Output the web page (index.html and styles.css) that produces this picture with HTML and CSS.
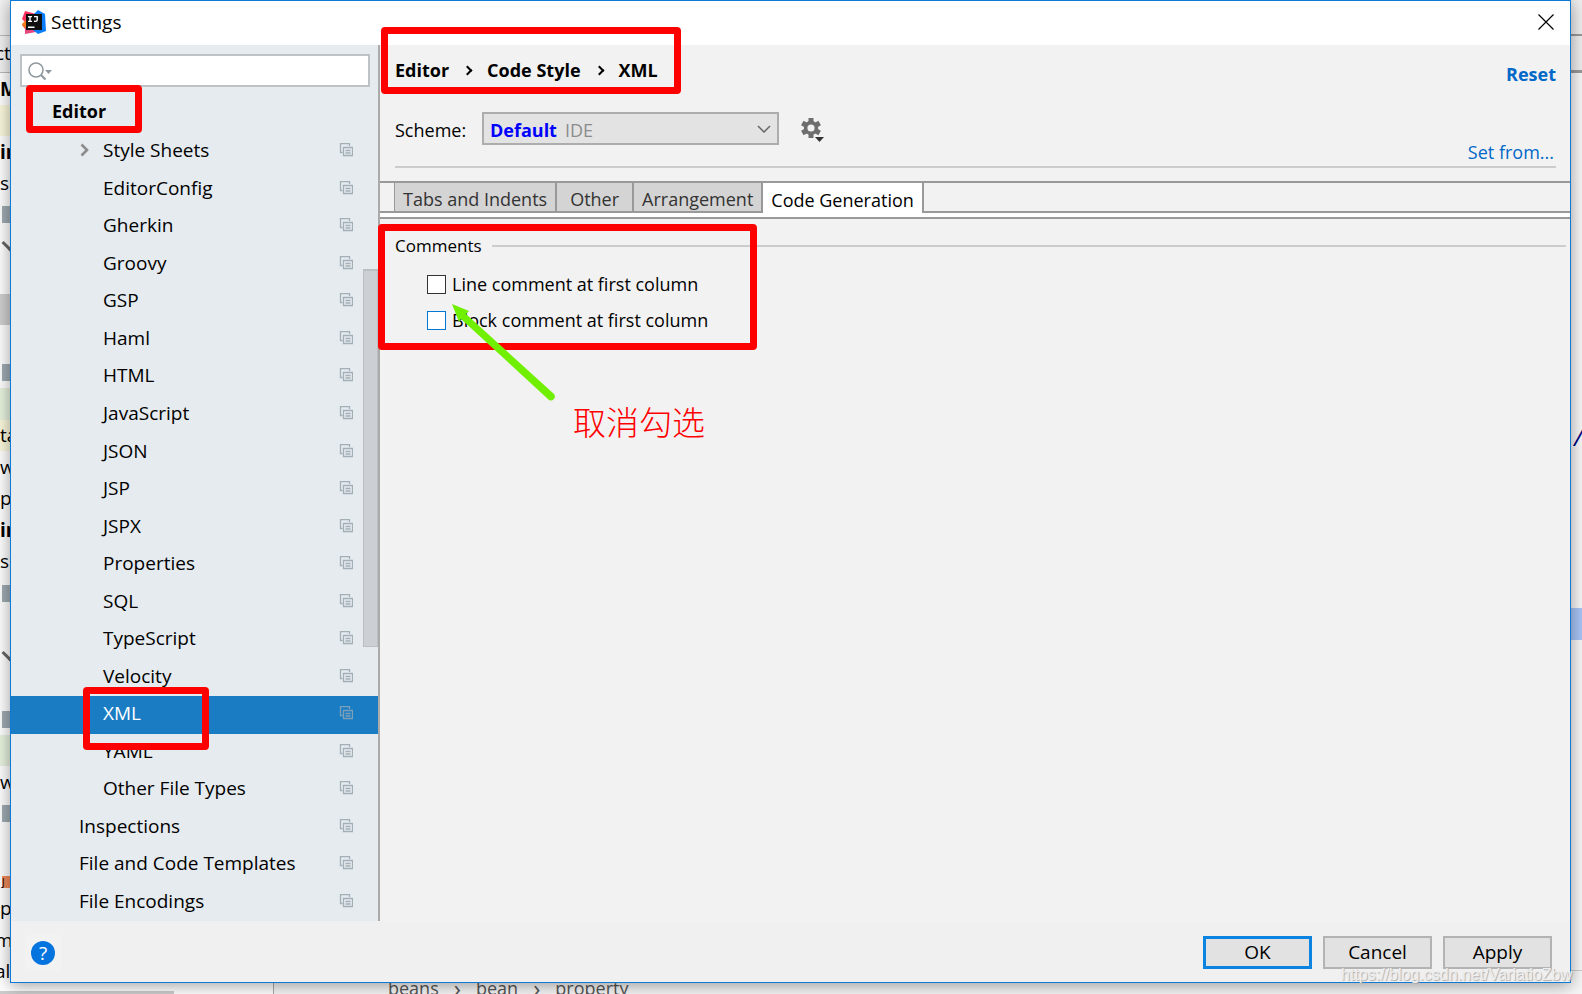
FILE: index.html
```html
<!DOCTYPE html>
<html lang="en">
<head>
<meta charset="utf-8">
<title>Settings</title>
<link rel="stylesheet" href="styles.css">
</head>
<body>
<svg class="defs" width="0" height="0" aria-hidden="true">
  <symbol id="copy" viewBox="0 0 14 14">
    <path d="M3.5 9.5H1.5V.5H10.5V3M4.500 4.500H13.5V12.5H4.500Z M6.500 7.500H11.500M6.500 10H11.500" fill="none" stroke="currentColor" stroke-width="1.3"/>
  </symbol>
</svg>

<div class="ide" aria-hidden="true">
  <div class="ide-left">
    <div class="ide-toolbar"></div>
    <div class="ide-nav cut">ct</div>
    <div class="ide-rows">
      <div class="r b">M</div><div class="r yellow"></div><div class="r b">in</div><div class="r">sr</div>
      <div class="r"><i class="sq"></i></div><div class="r"><i class="chev"></i></div><div class="r"></div><div class="r gray"></div>
      <div class="r"></div><div class="r"><i class="sq"></i></div><div class="r green"></div><div class="r yellow">ta</div>
      <div class="r">w</div><div class="r">p</div><div class="r b">in</div><div class="r">sr</div>
      <div class="r"><i class="sq"></i></div><div class="r"></div><div class="r"><i class="chev"></i></div><div class="r"></div>
      <div class="r"><i class="sq"></i></div><div class="r green"></div><div class="r">w</div><div class="r"><i class="sq"></i></div>
      <div class="r"></div><div class="r"><i class="jar">J</i></div><div class="r">p</div><div class="r cut">m</div><div class="r cut">al</div>
    </div>
  </div>
  <div class="ide-right">
    <div class="strip-a"></div><div class="strip-b"></div>
    <div class="strip-c"><span>/</span></div>
    <div class="strip-sel"></div><div class="strip-d"></div>
  </div>
  <div class="ide-bottom">
    <div class="hscroll"></div>
    <div class="crumb-line"><span>beans</span><i>›</i><span>bean</span><i>›</i><span>property</span></div>
  </div>
</div>

<div class="dialog" role="dialog" aria-label="Settings">
  <header class="titlebar">
    <svg class="logo" viewBox="0 0 24 24" aria-hidden="true">
      <path d="M3 1L14 4 12 18 4 20 0 15 3 12 0 9Z" fill="#fe315d"/>
      <path d="M0 14L4 10 8 17 3 19Z" fill="#f97a12"/>
      <path d="M3 17L12 18 14 22 3 24Z" fill="#e6467b"/>
      <path d="M12 4L16 0 23 4 24 21 16 24 11 20Z" fill="#087cfa"/>
      <path d="M4 4H20V20H4Z" fill="#101010"/>
      <path d="M6 6.6H10M8 6.6V11.4M6 11.4H10M12 6.6H15.2V10Q15.2 11.4 13.6 11.4L12 11.2M6 17.2H12.5" fill="none" stroke="#fff" stroke-width="1.4"/>
    </svg>
    <h1>Settings</h1>
    <button class="close" type="button" aria-label="Close"><svg viewBox="0 0 16 16"><path d="M.5 .5L15.5 15.5M15.5 .5L.5 15.5" stroke="#000" stroke-width="1.2"/></svg></button>
  </header>

  <div class="body">
    <aside class="sidebar">
      <div class="search">
        <svg viewBox="0 0 24 18" aria-hidden="true"><circle cx="8" cy="8" r="7" fill="none" stroke="#8f999f" stroke-width="1.6"/><path d="M13 13L17.500 17.500" stroke="#8f999f" stroke-width="2.200"/><path d="M17 8H24L20.500 12Z" fill="#8f999f"/></svg>
        <input type="text" aria-label="Search settings">
      </div>
      <div class="group">Editor</div>
      <ul class="tree">
        <li><svg class="arrow" viewBox="0 0 8 14" aria-hidden="true"><path d="M1 1.500L6.500 7 1 12.500" fill="none" stroke="#8c8c8c" stroke-width="2.600"/></svg>Style Sheets<svg class="copy"><use href="#copy"/></svg></li>
        <li>EditorConfig<svg class="copy"><use href="#copy"/></svg></li>
        <li>Gherkin<svg class="copy"><use href="#copy"/></svg></li>
        <li>Groovy<svg class="copy"><use href="#copy"/></svg></li>
        <li>GSP<svg class="copy"><use href="#copy"/></svg></li>
        <li>Haml<svg class="copy"><use href="#copy"/></svg></li>
        <li>HTML<svg class="copy"><use href="#copy"/></svg></li>
        <li>JavaScript<svg class="copy"><use href="#copy"/></svg></li>
        <li>JSON<svg class="copy"><use href="#copy"/></svg></li>
        <li>JSP<svg class="copy"><use href="#copy"/></svg></li>
        <li>JSPX<svg class="copy"><use href="#copy"/></svg></li>
        <li>Properties<svg class="copy"><use href="#copy"/></svg></li>
        <li>SQL<svg class="copy"><use href="#copy"/></svg></li>
        <li>TypeScript<svg class="copy"><use href="#copy"/></svg></li>
        <li>Velocity<svg class="copy"><use href="#copy"/></svg></li>
        <li class="selected">XML<svg class="copy"><use href="#copy"/></svg></li>
        <li>YAML<svg class="copy"><use href="#copy"/></svg></li>
        <li>Other File Types<svg class="copy"><use href="#copy"/></svg></li>
        <li class="upper">Inspections<svg class="copy"><use href="#copy"/></svg></li>
        <li class="upper">File and Code Templates<svg class="copy"><use href="#copy"/></svg></li>
        <li class="upper">File Encodings<svg class="copy"><use href="#copy"/></svg></li>
      </ul>
      <div class="scroll-thumb"></div>
    </aside>

    <main class="content">
      <div class="head">
        <nav class="crumbs" aria-label="Breadcrumb"><span>Editor</span><i></i><span>Code Style</span><i></i><span>XML</span></nav>
        <a class="reset" href="#reset">Reset</a>
      </div>
      <div class="scheme">
        <label for="scheme">Scheme:</label>
        <div class="combo">
          <select id="scheme"><option>Default</option></select>
          <span class="hint">IDE</span>
          <svg viewBox="0 0 14 8" aria-hidden="true"><path d="M1 1L7 7 13 1" fill="none" stroke="#666" stroke-width="1.500"/></svg>
        </div>
        <button class="gear" type="button" aria-label="Scheme actions">
          <svg viewBox="0 0 24 24"><g fill="#6e6e6e"><path d="M7.500 0H12.500V20H7.500Z"/><path d="M7.500 0H12.500V20H7.500Z" transform="rotate(60 10 10)"/><path d="M7.500 0H12.500V20H7.500Z" transform="rotate(120 10 10)"/><circle cx="10" cy="10" r="7.200"/></g><circle cx="10" cy="10" r="3.600" fill="#f2f2f2"/><path d="M14 19H23L18.500 24Z" fill="#333"/></svg>
        </button>
      </div>
      <div class="set-from"><a href="#set-from">Set from...</a></div>
      <div class="tabs" role="tablist">
        <button type="button" role="tab">Tabs and Indents</button>
        <button type="button" role="tab">Other</button>
        <button type="button" role="tab">Arrangement</button>
        <button type="button" role="tab" aria-selected="true">Code Generation</button>
      </div>
      <div class="tab-base"></div>
      <section class="panel">
        <h2>Comments</h2>
        <label><input type="checkbox">Line comment at first column</label>
        <label><input type="checkbox" class="hover">Block comment at first column</label>
      </section>
    </main>
  </div>

  <footer class="footer">
    <button class="help" type="button" aria-label="Help"><span>?</span></button>
    <button class="btn primary" type="button">OK</button>
    <button class="btn" type="button">Cancel</button>
    <button class="btn" type="button">Apply</button>
  </footer>
</div>

<div class="notes">
  <div class="mark mark-editor"></div>
  <div class="mark mark-path"></div>
  <div class="mark mark-comments"></div>
  <div class="mark mark-xml"></div>
  <svg class="pointer" viewBox="0 0 104 98" aria-hidden="true"><path d="M0 0L17 7 14 10 102 90A4 4 0 0 1 97 96L9 15 7 18Z" fill="#70f000"/></svg>
  <div class="note" lang="zh">取消勾选</div>
  <div class="watermark">https://blog.csdn.net/VariatioZbw</div>
</div>
</body>
</html>
```
FILE: styles.css
```css
* { box-sizing: border-box; }
html, body { height: 100%; margin: 0; }
body {
  position: relative;
  overflow: hidden;
  background: #fff;
  color: #000;
  font: 19px/26px "Open Sans", "Noto Sans", "Noto Sans CJK SC", sans-serif;
}
button, input, select { font: inherit; color: inherit; margin: 0; }
button { padding: 0; border: 0; background: none; }
a { color: #0068c8; text-decoration: none; }
svg { display: block; flex: none; }
.defs { position: absolute; }

/* Editor window behind the dialog */
.ide { position: absolute; inset: 0; }
.ide-left { position: absolute; inset: 0 auto 7px 0; width: 24px; overflow: hidden; display: flex; flex-direction: column; }
.ide-toolbar { height: 36px; background: #f2f2f2; border-bottom: 1px solid #bbb; }
.ide-nav { height: 37px; padding-top: 4px; background: #f2f2f2; border-bottom: 1px solid #bbb; }
.ide-rows { flex: 1; display: flex; flex-direction: column; }
.r { flex: 1; min-height: 0; display: flex; align-items: center; white-space: nowrap; }
.b { font-weight: 700; }
.cut { text-indent: -5px; }
.yellow { background: #fbf9dc; }
.green { background: #e8f3df; }
.gray { background: #d0d0d0; }
.sq { width: 10px; height: 17px; margin-left: 2px; background: #9fabb3; }
.chev { width: 12px; height: 12px; margin: -6px 0 0 4px; border: solid #666; border-width: 0 0 3px 3px; transform: rotate(-45deg); }
.jar { width: 10px; margin: 10px 0 0 2px; background: #f28b5b; font-size: 10px; line-height: 12px; font-style: normal; }
.ide-right { position: absolute; inset: 0 0 11px auto; width: 11px; background: #f8f8f8; display: flex; flex-direction: column; }
.strip-a { height: 36px; background: #efefef; border-bottom: 2px solid #999; }
.strip-b { height: 37px; background: #efefef; border-bottom: 3px solid #999; }
.strip-c { height: 535px; display: flex; align-items: center; padding: 192px 0 0 3px; font-size: 24px; font-style: italic; color: #000080; overflow: hidden; }
.strip-sel { height: 32px; background: #a8c5f8; }
.strip-d { height: 331px; border-bottom: 1px solid #ccc; }
.ide-bottom { position: absolute; inset: auto 0 0 0; height: 14px; display: flex; overflow: hidden; background: #f6f6f6; }
.hscroll { width: 274px; border-right: 1px solid #aaa; background: linear-gradient(#ccc, #ccc) left bottom / 174px 3px no-repeat #fff; }
.crumb-line { display: flex; gap: 15px; padding-left: 114px; color: #555; font-size: 18px; line-height: 17px; }
.crumb-line i { font-style: normal; font-size: 24px; line-height: 15px; }

/* Dialog */
.dialog {
  position: absolute;
  inset: 0 11px 11px 10px;
  display: flex;
  flex-direction: column;
  border: 1px solid #0f7ad5;
  background: #f0f0f0;
  box-shadow: 0 2px 16px rgba(0, 0, 0, .4);
}
.titlebar { display: flex; align-items: center; height: 44px; padding: 0 16px 2px 11px; background: #fff; }
.logo { width: 24px; height: 24px; }
h1 { flex: 1; margin: 0 0 0 5px; font-size: 19px; font-weight: 400; }
.close svg { width: 16px; height: 16px; }
.body { flex: 1; min-height: 0; display: flex; }

.sidebar { position: relative; width: 369px; display: flex; flex-direction: column; background: #e6ebef; border-right: 2px solid #aaa; }
.search { display: flex; align-items: center; height: 33px; margin: 9px 8px 0 9px; padding-left: 6px; background: #fff; border: 2px solid #bec2c4; }
.search svg { width: 24px; height: 18px; }
.search input { flex: 1; min-width: 0; border: 0; outline: 0; background: none; }
.group { height: 46px; padding: 11px 0 0 41px; font-size: 18px; font-weight: 700; }
.tree { flex: 1; min-height: 0; margin: 0; padding: 0; list-style: none; display: flex; flex-direction: column; }
.tree li { position: relative; flex: 1; min-height: 0; display: flex; align-items: center; padding: 0 25px 3px 92px; white-space: nowrap; }
.tree li.upper { padding-left: 68px; }
.tree li.selected { background: #1a7dc4; color: #fff; }
.copy { width: 14px; height: 14px; margin-left: auto; color: #a3afb7; }
.selected .copy { color: #7da0b8; }
.arrow { position: absolute; left: 69px; width: 9px; height: 14px; }
.scroll-thumb { position: absolute; top: 224px; right: 0; width: 15px; height: 378px; background: #ccd0d5; border: solid #bbbfc2; border-width: 2px 1px 1px; }

.content { flex: 1; min-width: 0; display: flex; flex-direction: column; background: #f2f2f2; font-size: 18px; }
.head { display: flex; justify-content: space-between; align-items: flex-start; height: 67px; padding: 12px 14px 0 15px; font-weight: 700; }
.crumbs { display: flex; align-items: center; }
.crumbs i { width: 7px; height: 7px; margin: 0 16px 0 15px; border: solid #000; border-width: 2px 2px 0 0; transform: rotate(45deg); }
.reset { margin-top: 4px; }
.scheme { display: flex; align-items: center; height: 33px; padding-left: 15px; }
.scheme label { width: 87px; padding-top: 2px; }
.combo { position: relative; width: 297px; height: 33px; }
.combo select { width: 100%; height: 100%; padding: 2px 6px 0; appearance: none; background: #e3e3e3; border: 2px solid #adadad; border-radius: 0; color: #00f; font-weight: 700; }
.combo .hint { position: absolute; left: 83px; top: 5px; color: #8c8c8c; pointer-events: none; }
.combo svg { position: absolute; right: 8px; top: 13px; width: 14px; height: 8px; pointer-events: none; }
.gear { margin: 3px 0 0 22px; }
.gear svg { width: 24px; height: 24px; }
.set-from { display: flex; justify-content: flex-end; align-items: flex-end; height: 23px; margin: 0 14px 13px 15px; padding: 0 2px 1px 0; border-bottom: 2px solid #ccc; }
.tabs { display: flex; height: 32px; padding-left: 14px; border: solid #999; border-width: 2px 0; }
.tabs button { padding: 3px 8px 0; background: #d4d4d4; border-right: 2px solid #999; color: #333; white-space: nowrap; }
.tabs button:first-child { border-left: 1px solid #999; padding: 3px 8px 0; }
.tabs button:nth-child(2) { padding: 3px 13px 0; }
.tabs button[aria-selected] { height: 32px; padding: 3px 8px 2px; background: #fff; color: #000; }
.tab-base { height: 6px; background: #fff; border-bottom: 2px solid #999; }
.panel { display: flex; flex-direction: column; align-items: flex-start; gap: 10px; padding: 15px 4px 0 15px; }
h2 { align-self: stretch; display: flex; align-items: center; gap: 10px; margin: 0 0 3px; font-size: 17px; line-height: 24px; font-weight: 400; }
h2::after { content: ""; flex: 1; height: 2px; background: #ccc; }
.panel label { display: flex; align-items: center; gap: 6px; margin-left: 32px; }
.panel input { width: 19px; height: 19px; appearance: none; background: #fff; border: 1px solid #333; outline: 0; }
.panel input.hover { border: 1px solid #0078d7; }

.footer { display: flex; align-items: center; height: 61px; gap: 11px; padding: 1px 18px 0; }
.help { width: 36px; height: 36px; margin: 2px auto 0 -4px; display: flex; align-items: center; justify-content: center; background: #f2f2f2; }
.help span { width: 24px; height: 24px; line-height: 24px; border-radius: 50%; background: #0574de; color: #fff; }
.btn { width: 109px; height: 33px; background: #e2e2e2; border: 2px solid #b3b3b3; line-height: 24px; }
.btn.primary { border: 3px solid #0a84e0; }

/* Annotations drawn over the dialog */
.notes { position: absolute; inset: 0; pointer-events: none; }
.mark { position: absolute; border: 7px solid #f00; border-radius: 4px; }
.mark-editor { left: 26px; top: 85px; width: 116px; height: 48px; }
.mark-path { left: 381px; top: 27px; width: 300px; height: 67px; }
.mark-comments { left: 378px; top: 224px; width: 379px; height: 126px; }
.mark-xml { left: 83px; top: 687px; width: 126px; height: 63px; }
.pointer { position: absolute; left: 452px; top: 304px; width: 104px; height: 98px; }
.note { position: absolute; left: 573px; top: 398px; font: 300 33px/46px "Noto Sans CJK SC", sans-serif; color: #f00; }
.watermark { position: absolute; right: 10px; bottom: 9px; font: 16px/20px "Liberation Sans", sans-serif; color: #eee; text-shadow: 1px 1px 1px #aaa; }
```
